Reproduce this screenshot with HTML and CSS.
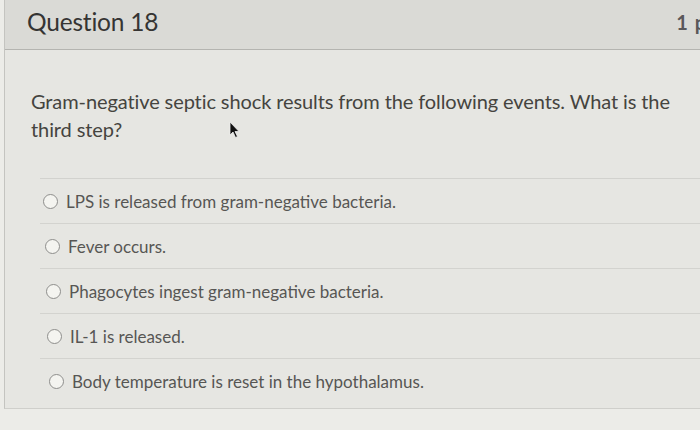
FILE: index.html
```html
<!DOCTYPE html>
<html>
<head>
<meta charset="utf-8">
<link rel="stylesheet" href="styles.css">
</head>
<body>
<div class="page">
  <div class="question">
    <div class="header">
      <h2 class="title">Question 18</h2>
      <span class="points">1 p</span>
    </div>
    <div class="body">
      <p class="text">Gram-negative septic shock results from the following events. What is the third step?</p>
      <ul class="answers">
        <li class="answer a1"><span class="radio"></span><span class="label">LPS is released from gram-negative bacteria.</span></li>
        <li class="answer a2"><span class="radio"></span><span class="label">Fever occurs.</span></li>
        <li class="answer a3"><span class="radio"></span><span class="label">Phagocytes ingest gram-negative bacteria.</span></li>
        <li class="answer a4"><span class="radio"></span><span class="label">IL-1 is released.</span></li>
        <li class="answer a5"><span class="radio"></span><span class="label">Body temperature is reset in the hypothalamus.</span></li>
      </ul>
    </div>
  </div>
  <svg class="cursor" width="12" height="18" viewBox="0 0 12 18"><path d="M1 1 L1 14 L4 11 L6.5 16.5 L8.5 15.5 L6 10.5 L10 10.5 Z" fill="#111" stroke="#eee" stroke-width="0.8"/></svg>
</div>
</body>
</html>
```
FILE: styles.css
```css
html, body {
  margin: 0;
  padding: 0;
}
body {
  width: 700px;
  height: 430px;
  overflow: hidden;
  background: #ececE8;
  font-family: Lato, "Open Sans", sans-serif;
}
.page {
  position: relative;
  height: 430px;
}
.question {
  margin-left: 4px;
  border-left: 1px solid #c4c4c0;
  border-bottom: 1px solid #cfcfcb;
  background: #e6e6e2;
  height: 408px;
}
.header {
  height: 50px;
  background: #dadad6;
  border-bottom: 1px solid #b4b4b0;
  display: flex;
  align-items: center;
  justify-content: space-between;
  padding-left: 22px;
  padding-bottom: 6px;
  box-sizing: border-box;
  overflow: hidden;
}
.title {
  margin: 0;
  font-size: 24.5px;
  font-weight: 400;
  color: #353433;
  letter-spacing: -0.2px;
}
.points {
  font-size: 20px;
  color: #5a585a;
  margin-right: -7px;
  font-weight: 700;
  letter-spacing: 1px;
  white-space: nowrap;
}
.body {
  padding: 37px 0 0 26px;
}
.text {
  margin: 0;
  font-size: 20px;
  line-height: 28px;
  color: #45443f;
  width: 650px;
  letter-spacing: -0.1px;
}
.answers {
  list-style: none;
  margin: 35px 0 0 9px;
  padding: 0;
  border-top: 1px solid #d2d2ce;
}
.answer {
  height: 44px;
  display: flex;
  align-items: center;
  border-bottom: 1px solid #d3d3cf;
  color: #575654;
  font-size: 17px;
}
.answer:last-child {
  border-bottom: none;
}
.radio {
  width: 13px;
  height: 13px;
  border: 1.5px solid #8e8e8c;
  border-radius: 50%;
  background: #f4f4f0;
  margin-right: 8px;
  flex: none;
}
.a1 { padding-left: 3px; }
.a2 { padding-left: 5px; }
.a3 { padding-left: 6px; }
.a4 { padding-left: 7px; }
.a5 { padding-left: 9px; }
.cursor {
  position: absolute;
  left: 229px;
  top: 121px;
}
```
